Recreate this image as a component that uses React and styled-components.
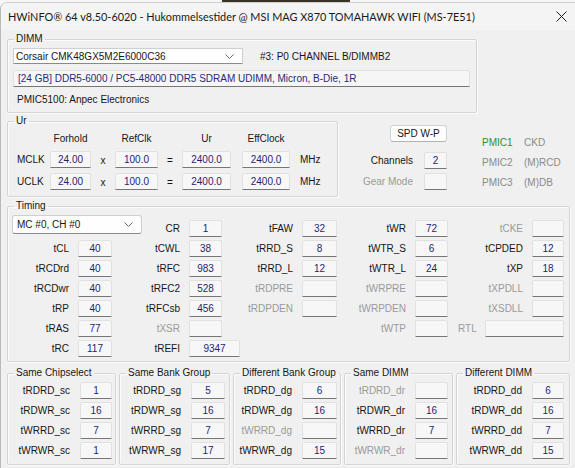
import React from 'react';
import styled, { createGlobalStyle } from 'styled-components';

const GlobalStyle = createGlobalStyle`
  html, body { margin: 0; padding: 0; background: #f4f4f4; }
  body { font-family: "Liberation Sans", Arial, sans-serif; }
`;

// desktop strip peeking above the window
const Desk = styled.div`
  width: 575px;
  height: 468px;
  overflow: hidden;
  box-sizing: border-box;
  padding-top: 2px;
  background: linear-gradient(to right, #f6f6f6 0 222px, #3b3228 222px 350px, #f6f6f6 350px) top / 100% 3px no-repeat, #f6f6f6;
`;

const Window = styled.div`
  height: 466px;
  background: #f0f0f0;
  border-left: 1px solid #b9b9b9;
  border-top: 1px solid #cfcfcf;
  border-top-left-radius: 7px;
  overflow: hidden;
`;

const TitleBar = styled.div`
  height: 27px;
  display: flex;
  align-items: center;
  justify-content: space-between;
  padding: 0 8px 0 7px;
  background: #f4f4f4;
  font-family: Lato, "Liberation Sans", sans-serif;
  font-size: 10.9px;
  color: #1a1a1a;
  white-space: nowrap;
`;

const Content = styled.div`
  padding-left: 6px;
  font-size: 10px;
  color: #161616;
`;

const Group = styled.fieldset`
  margin: ${p => p.$mt || 0}px 0 0 0;
  padding: 0;
  min-width: 0;
  width: ${p => p.$w}px;
  box-sizing: border-box;
  border: 1px solid #d4d4d4;
  border-radius: 2px;
  box-shadow: 1px 1px 0 #fbfbfb, inset 1px 1px 0 #fbfbfb;
`;

const Legend = styled.legend`
  margin-left: 6px;
  padding: 0 2px;
  font-size: 10px;
  line-height: 12px;
  color: #161616;
  white-space: nowrap;
`;

const Body = styled.div`
  padding: ${p => p.$pad};
`;

const Value = styled.div`
  box-sizing: border-box;
  height: 17px;
  width: ${p => (p.$w ? `${p.$w}px` : '100%')};
  background: #f7f7f7;
  border: 1px solid #e1e1e1;
  border-bottom: 1px solid #767676;
  border-radius: 2px 2px 0 0;
  color: #1f1f72;
  font-size: 10px;
  line-height: 15px;
  text-align: center;
`;

const Label = styled.div`
  text-align: ${p => p.$align || 'right'};
  padding: 0 ${p => p.$pr ?? 9}px 0 ${p => p.$pl || 0}px;
  line-height: 17px;
  white-space: nowrap;
  color: ${p => (p.$off ? '#9a9a9a' : '#161616')};
`;

/* ---------- combo boxes ---------- */

const Chevron = () => (
  <svg width="9" height="5" viewBox="0 0 9 5">
    <polyline points="0.5,0.5 4.5,4.5 8.5,0.5" fill="none" stroke="#6a6a6a" strokeWidth="1" />
  </svg>
);

const ComboRow = styled.div`
  display: flex;
  align-items: center;
  margin-left: 5px;
`;

const ComboField = styled.div`
  box-sizing: border-box;
  width: ${p => p.$w}px;
  height: ${p => p.$h}px;
  display: flex;
  align-items: center;
  justify-content: space-between;
  padding: 0 8px 0 2px;
  background: #fefefe;
  border: 1px solid #cfcfcf;
  border-bottom-color: #8a8a8a;
  border-radius: ${p => (p.$round ? 3 : 1)}px;
  white-space: nowrap;
`;

const SlotText = styled.span`
  margin-left: 17px;
  white-space: nowrap;
`;

const InfoBox = styled(Value)`
  width: 457px;
  margin: 6px 0 0 5px;
  text-align: left;
  padding-left: 4px;
  background: #f6f6f6;
  color: #28287a;
`;

const PlainLine = styled.div`
  margin: 6px 0 0 9px;
  line-height: 14px;
`;

/* ---------- clock section ---------- */

const MiddleRow = styled.div`
  display: flex;
  align-items: flex-start;
`;

const ClockGrid = styled.div`
  display: grid;
  grid-template-columns: 42px 41px 24px 43px 24px 49px 11px 48px 1fr;
  grid-template-rows: 16px 17px 17px;
  row-gap: 5px;
  align-items: center;
`;

const Head = styled.div`
  text-align: center;
  white-space: nowrap;
`;

const Op = styled.div`
  text-align: center;
  line-height: 17px;
  padding-top: 2px;
`;

const SideColumn = styled.div`
  width: 109px;
  padding-top: 12px;
  display: flex;
  flex-direction: column;
  align-items: flex-end;
`;

const PushButton = styled.div`
  box-sizing: border-box;
  width: 57px;
  height: 17px;
  line-height: 15px;
  text-align: center;
  background: #fdfdfd;
  border: 1px solid #d2d2d2;
  border-bottom-color: #b3b3b3;
  border-radius: 3px;
`;

const SideRow = styled.div`
  display: flex;
  align-items: center;
  margin-top: ${p => p.$mt}px;
`;

const PmicGrid = styled.div`
  margin-left: 35px;
  padding-top: 19px;
  display: grid;
  grid-template-columns: 42px auto;
  grid-auto-rows: 20px;
  align-items: center;
  color: #8a8a8a;
`;

const Pmic = styled.span`
  color: ${p => (p.$on ? '#2f8f2f' : '#8a8a8a')};
`;

/* ---------- timing section ---------- */

const TimingGrid = styled.div`
  display: grid;
  grid-template-columns: 70px 34px 77px 33px 80px 35px 78px 33px 84px 32px;
  grid-auto-rows: 17px;
  row-gap: 3px;
`;

const TimingCombo = styled(ComboField)`
  grid-column: 1 / 3;
  margin: -5px 0 0 4px;
  padding-left: 4px;
`;

const RtlCell = styled.div`
  grid-column: 9 / 11;
  display: flex;
  align-items: center;
  padding-left: 10px;
  gap: 8px;
`;

/* ---------- turnaround groups ---------- */

const BottomRow = styled.div`
  display: flex;
  gap: 3px;
`;

const PairGrid = styled.div`
  display: grid;
  grid-template-columns: ${p => p.$lw}px ${p => p.$bw}px;
  grid-auto-rows: 17px;
  row-gap: 3px;
`;

const CloseIcon = () => (
  <svg width="11" height="11" viewBox="0 0 11 11">
    <path d="M0.5 0.5 L10.5 10.5 M10.5 0.5 L0.5 10.5" stroke="#1e1e1e" strokeWidth="1" />
  </svg>
);

const timingRows = [
  [null, ['CR', '1'], ['tFAW', '32'], ['tWR', '72'], ['tCKE', '', true]],
  [['tCL', '40'], ['tCWL', '38'], ['tRRD_S', '8'], ['tWTR_S', '6'], ['tCPDED', '12']],
  [['tRCDrd', '40'], ['tRFC', '983'], ['tRRD_L', '12'], ['tWTR_L', '24'], ['tXP', '18']],
  [['tRCDwr', '40'], ['tRFC2', '528'], ['tRDPRE', '', true], ['tWRPRE', '', true], ['tXPDLL', '', true]],
  [['tRP', '40'], ['tRFCsb', '456'], ['tRDPDEN', '', true], ['tWRPDEN', '', true], ['tXSDLL', '', true]],
  [['tRAS', '77'], ['tXSR', '', true], null, ['tWTP', '', true], 'rtl'],
  [['tRC', '117'], ['tREFI', '9347', false, 51], null, null, null],
];

const groups = [
  { title: 'Same Chipselect', w: 109, lw: 72, bw: 32, rows: [['tRDRD_sc', '1'], ['tRDWR_sc', '16'], ['tWRRD_sc', '7'], ['tWRWR_sc', '1']] },
  { title: 'Same Bank Group', w: 111, lw: 71, bw: 34, rows: [['tRDRD_sg', '5'], ['tRDWR_sg', '16'], ['tWRRD_sg', '7'], ['tWRWR_sg', '17']] },
  { title: 'Different Bank Group', w: 108, lw: 68, bw: 35, rows: [['tRDRD_dg', '6'], ['tRDWR_dg', '16'], ['tWRRD_dg', '', true], ['tWRWR_dg', '15']] },
  { title: 'Same DIMM', w: 109, lw: 70, bw: 33, rows: [['tRDRD_dr', '', true], ['tRDWR_dr', '16'], ['tWRRD_dr', '7'], ['tWRWR_dr', '', true]] },
  { title: 'Different DIMM', w: 114, lw: 75, bw: 32, rows: [['tRDRD_dd', '6'], ['tRDWR_dd', '16'], ['tWRRD_dd', '7'], ['tWRWR_dd', '15']] },
];

const TimingCells = () =>
  timingRows.flatMap((row, r) =>
    row.map((cell, c) => {
      const key = `${r}-${c}`;
      if (r === 0 && c === 0) {
        return (
          <TimingCombo key={key} $w={130} $h={19} $round>
            <span>MC #0, CH #0</span>
            <Chevron />
          </TimingCombo>
        );
      }
      if (cell === 'rtl') {
        return (
          <RtlCell key={key}>
            <Label $off $pr={0}>RTL</Label>
            <Value />
          </RtlCell>
        );
      }
      if (!cell) {
        return (
          <React.Fragment key={key}>
            <div />
            <div />
          </React.Fragment>
        );
      }
      const [name, val, off, w] = cell;
      return (
        <React.Fragment key={key}>
          <Label $off={off}>{name}</Label>
          <Value $w={w}>{val}</Value>
        </React.Fragment>
      );
    })
  );

export default function App() {
  return (
    <>
      <GlobalStyle />
      <Desk>
        <Window>
          <TitleBar>
            <span>HWiNFO® 64 v8.50-6020 - Hukommelsestider @ MSI MAG X870 TOMAHAWK WIFI (MS-7E51)</span>
            <CloseIcon />
          </TitleBar>

          <Content>
            <Group $w={470} $mt={3}>
              <Legend>DIMM</Legend>
              <Body $pad="3px 0 5px 0">
                <ComboRow>
                  <ComboField $w={230} $h={16}>
                    <span>Corsair CMK48GX5M2E6000C36</span>
                    <Chevron />
                  </ComboField>
                  <SlotText>#3: P0 CHANNEL B/DIMMB2</SlotText>
                </ComboRow>
                <InfoBox>[24 GB] DDR5-6000 / PC5-48000 DDR5 SDRAM UDIMM, Micron, B-Die, 1R</InfoBox>
                <PlainLine>PMIC5100: Anpec Electronics</PlainLine>
              </Body>
            </Group>

            <MiddleRow>
              <Group $w={331} $mt={2}>
                <Legend>Ur</Legend>
                <Body $pad="3px 0 6px 0">
                  <ClockGrid>
                    <div />
                    <Head>Forhold</Head>
                    <div />
                    <Head>RefClk</Head>
                    <div />
                    <Head>Ur</Head>
                    <div />
                    <Head>EffClock</Head>
                    <div />
                    {['MCLK', 'UCLK'].map(name => (
                      <React.Fragment key={name}>
                        <Label $align="left" $pl={9} $pr={0}>{name}</Label>
                        <Value>24.00</Value>
                        <Op>x</Op>
                        <Value>100.0</Value>
                        <Op>=</Op>
                        <Value>2400.0</Value>
                        <div />
                        <Value>2400.0</Value>
                        <Label $align="left" $pl={10} $pr={0}>MHz</Label>
                      </React.Fragment>
                    ))}
                  </ClockGrid>
                </Body>
              </Group>

              <SideColumn>
                <PushButton>SPD W-P</PushButton>
                <SideRow $mt={10}>
                  <Label $pr={11}>Channels</Label>
                  <Value $w={23}>2</Value>
                </SideRow>
                <SideRow $mt={4}>
                  <Label $off $pr={11}>Gear Mode</Label>
                  <Value $w={23} />
                </SideRow>
              </SideColumn>

              <PmicGrid>
                <Pmic $on>PMIC1</Pmic>
                <span>CKD</span>
                <Pmic>PMIC2</Pmic>
                <span>(M)RCD</span>
                <Pmic>PMIC3</Pmic>
                <span>(M)DB</span>
              </PmicGrid>
            </MiddleRow>

            <Group $w={563} $mt={3}>
              <Legend>Timing</Legend>
              <Body $pad="8px 0 4px 0">
                <TimingGrid>
                  <TimingCells />
                </TimingGrid>
              </Body>
            </Group>

            <BottomRow>
              {groups.map(g => (
                <Group key={g.title} $w={g.w} $mt={5}>
                  <Legend>{g.title}</Legend>
                  <Body $pad="3px 0 5px 0">
                    <PairGrid $lw={g.lw} $bw={g.bw}>
                      {g.rows.map(([name, val, off]) => (
                        <React.Fragment key={name}>
                          <Label $off={off} $pr={10}>{name}</Label>
                          <Value>{val}</Value>
                        </React.Fragment>
                      ))}
                    </PairGrid>
                  </Body>
                </Group>
              ))}
            </BottomRow>
          </Content>
        </Window>
      </Desk>
    </>
  );
}
